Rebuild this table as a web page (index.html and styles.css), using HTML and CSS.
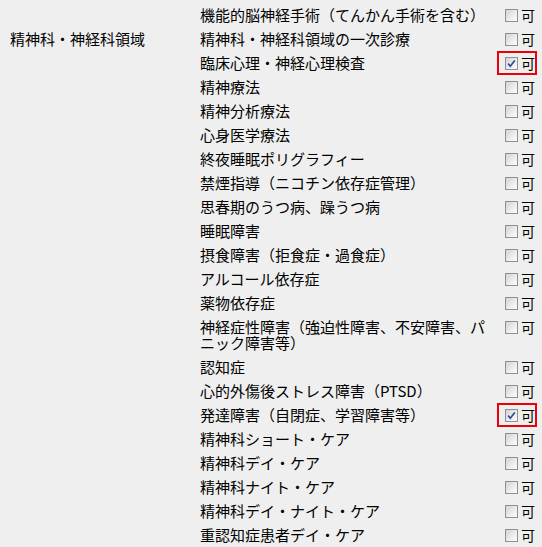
FILE: index.html
```html
<!DOCTYPE html>
<html lang="ja">
<head>
  <meta charset="UTF-8" />
  <meta name="viewport" content="width=device-width, initial-scale=1.0" />
  <title>診療内容</title>
  <link rel="stylesheet" href="styles.css">
</head>
<body>
  <table class="list">
    <tr>
      <td class="group"></td>
      <td class="item">機能的脳神経手術（てんかん手術を含む）</td>
      <td class="opt"><label class="choice"><input type="checkbox">可</label></td>
    </tr>
    <tr>
      <td class="group" rowspan="21">精神科・神経科領域</td>
      <td class="item">精神科・神経科領域の一次診療</td>
      <td class="opt"><label class="choice"><input type="checkbox">可</label></td>
    </tr>
    <tr>
      <td class="item">臨床心理・神経心理検査</td>
      <td class="opt"><label class="choice on"><input type="checkbox" checked>可</label></td>
    </tr>
    <tr>
      <td class="item">精神療法</td>
      <td class="opt"><label class="choice"><input type="checkbox">可</label></td>
    </tr>
    <tr>
      <td class="item">精神分析療法</td>
      <td class="opt"><label class="choice"><input type="checkbox">可</label></td>
    </tr>
    <tr>
      <td class="item">心身医学療法</td>
      <td class="opt"><label class="choice"><input type="checkbox">可</label></td>
    </tr>
    <tr>
      <td class="item">終夜睡眠ポリグラフィー</td>
      <td class="opt"><label class="choice"><input type="checkbox">可</label></td>
    </tr>
    <tr>
      <td class="item">禁煙指導（ニコチン依存症管理）</td>
      <td class="opt"><label class="choice"><input type="checkbox">可</label></td>
    </tr>
    <tr>
      <td class="item">思春期のうつ病、躁うつ病</td>
      <td class="opt"><label class="choice"><input type="checkbox">可</label></td>
    </tr>
    <tr>
      <td class="item">睡眠障害</td>
      <td class="opt"><label class="choice"><input type="checkbox">可</label></td>
    </tr>
    <tr>
      <td class="item">摂食障害（拒食症・過食症）</td>
      <td class="opt"><label class="choice"><input type="checkbox">可</label></td>
    </tr>
    <tr>
      <td class="item">アルコール依存症</td>
      <td class="opt"><label class="choice"><input type="checkbox">可</label></td>
    </tr>
    <tr>
      <td class="item">薬物依存症</td>
      <td class="opt"><label class="choice"><input type="checkbox">可</label></td>
    </tr>
    <tr>
      <td class="item">神経症性障害（強迫性障害、不安障害、パニック障害等）</td>
      <td class="opt"><label class="choice"><input type="checkbox">可</label></td>
    </tr>
    <tr>
      <td class="item">認知症</td>
      <td class="opt"><label class="choice"><input type="checkbox">可</label></td>
    </tr>
    <tr>
      <td class="item">心的外傷後ストレス障害（PTSD）</td>
      <td class="opt"><label class="choice"><input type="checkbox">可</label></td>
    </tr>
    <tr>
      <td class="item">発達障害（自閉症、学習障害等）</td>
      <td class="opt"><label class="choice on"><input type="checkbox" checked>可</label></td>
    </tr>
    <tr>
      <td class="item">精神科ショート・ケア</td>
      <td class="opt"><label class="choice"><input type="checkbox">可</label></td>
    </tr>
    <tr>
      <td class="item">精神科デイ・ケア</td>
      <td class="opt"><label class="choice"><input type="checkbox">可</label></td>
    </tr>
    <tr>
      <td class="item">精神科ナイト・ケア</td>
      <td class="opt"><label class="choice"><input type="checkbox">可</label></td>
    </tr>
    <tr>
      <td class="item">精神科デイ・ナイト・ケア</td>
      <td class="opt"><label class="choice"><input type="checkbox">可</label></td>
    </tr>
    <tr>
      <td class="item">重認知症患者デイ・ケア</td>
      <td class="opt"><label class="choice"><input type="checkbox">可</label></td>
    </tr>
  </table>
</body>
</html>
```

FILE: styles.css
```css
body {
  margin: 0;
  background-color: #efefef;
  color: #000;
  font-family: "Noto Sans CJK JP", sans-serif;
  font-size: 15px;
}
.list {
  border-collapse: collapse;
  margin: 3px 0 0 10px;
}
.list td {
  padding: 4px 0;
  line-height: 16px;
  vertical-align: top;
}
.group {
  width: 190px;
}
.item {
  width: 297px;
}
.list td.opt {
  padding: 0;
}
.choice {
  display: flex;
  align-items: center;
  gap: 3px;
  box-sizing: border-box;
  width: 40px;
  height: 24px;
  padding-left: 6px;
  border: 2px solid transparent;
  font-size: 14px;
}
.choice.on {
  border-color: #e8000b;
}
.choice input {
  appearance: none;
  -webkit-appearance: none;
  box-sizing: border-box;
  width: 13px;
  height: 13px;
  margin: 0;
  border: 1px solid #8e8f8f;
  background: linear-gradient(135deg, #d2d3d6 0%, #eeeeee 60%, #fbfbfb 100%);
}
.choice input:checked {
  background: url("data:image/svg+xml,%3Csvg xmlns='http://www.w3.org/2000/svg' viewBox='0 0 11 11'%3E%3Cpath d='M2.2 5.6l2.1 2.6L8.8 2.4' fill='none' stroke='%233048a0' stroke-width='1.7'/%3E%3C/svg%3E") center / 11px 11px no-repeat,
    linear-gradient(135deg, #d2d3d6 0%, #eeeeee 60%, #fbfbfb 100%);
}
```
